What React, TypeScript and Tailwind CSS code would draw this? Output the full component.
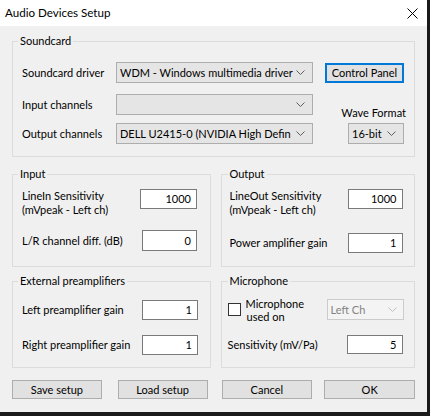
import React from "react";

function Chevron({ color = "#5f5f5f" }: { color?: string }) {
  return (
    <svg width="9" height="5" viewBox="0 0 9 5" className="shrink-0">
      <polyline points="0.5,0.5 4.5,4.5 8.5,0.5" fill="none" stroke={color} strokeWidth="1" />
    </svg>
  );
}

function Combo({ text, className = "" }: { text?: string; className?: string }) {
  return (
    <div className={"flex items-center justify-between border border-[#adadad] bg-[#e5e5e5] pl-[3px] pr-[7px] " + className}>
      <span className="whitespace-nowrap overflow-hidden">{text}</span>
      <Chevron />
    </div>
  );
}

function Field({ value, className = "" }: { value: string; className?: string }) {
  return (
    <div className={"flex items-center justify-end border border-[#7a7a7a] bg-white pr-[5px] shrink-0 " + className}>
      {value}
    </div>
  );
}

function Btn({ label, className = "" }: { label: string; className?: string }) {
  return (
    <div className={"flex items-center justify-center border border-[#adadad] bg-[#e1e1e1] " + className}>
      {label}
    </div>
  );
}

export default function App() {
  return (
    <div className="w-[430px] h-[416px] bg-[#1a1a1a] overflow-hidden font-['Lato',sans-serif] text-[11px] leading-[16px] text-black">
      <div className="w-[427px] h-[412px] bg-[#f0f0f0] flex flex-col">
        {/* Title bar */}
        <div className="h-[26px] bg-white flex items-center justify-between pl-[5px] pr-[9px] shrink-0">
          <span className="text-[11.6px] whitespace-nowrap">Audio Devices Setup</span>
          <svg width="11" height="11" viewBox="0 0 11 11">
            <line x1="0.5" y1="0.5" x2="10.5" y2="10.5" stroke="#000" strokeWidth="1" />
            <line x1="10.5" y1="0.5" x2="0.5" y2="10.5" stroke="#000" strokeWidth="1" />
          </svg>
        </div>

        {/* Soundcard */}
        <fieldset className="mx-[12px] mt-[7px] border border-[#dcdcdc] p-0">
          <legend className="ml-[5px] px-[2px] leading-[16px]">Soundcard</legend>
          <div className="flex pl-[9px] pt-[13px] pb-[12px] whitespace-nowrap">
            <div className="flex flex-col w-[291px]">
              <div className="flex items-center h-[21px]">
                <span className="w-[94px]">Soundcard driver</span>
                <Combo text="WDM - Windows multimedia driver" className="w-[197px] h-[21px]" />
              </div>
              <div className="flex items-center h-[21px] mt-[11px]">
                <span className="w-[94px]">Input channels</span>
                <Combo className="w-[197px] h-[21px]" />
              </div>
              <div className="flex items-center h-[21px] mt-[8px]">
                <span className="w-[94px]">Output channels</span>
                <Combo text="DELL U2415-0 (NVIDIA High Defin" className="w-[197px] h-[21px]" />
              </div>
            </div>
            <div className="flex flex-col ml-[12px] w-[81px]">
              <div className="mt-[1px] h-[20px] w-[79px] border-2 border-[#0078d7] bg-[#e1e1e1] flex items-center justify-center">
                Control Panel
              </div>
              <div className="mt-[22px] text-right">Wave Format</div>
              <Combo text="16-bit" className="mt-[2px] ml-[23px] w-[56px] h-[21px]" />
            </div>
          </div>
        </fieldset>

        {/* Input / Output */}
        <div className="flex mx-[12px] mt-[9px] gap-[10px] whitespace-nowrap">
          <fieldset className="w-[199px] border border-[#dcdcdc] p-0">
            <legend className="ml-[5px] px-[2px] leading-[16px]">Input</legend>
            <div className="pl-[9px] pt-[7px] pb-[13px]">
              <div className="flex items-start">
                <div className="w-[118px] leading-[14px]">
                  LineIn Sensitivity
                  <br />
                  (mVpeak - Left ch)
                </div>
                <Field value="1000" className="w-[57px] h-[20px]" />
              </div>
              <div className="flex items-center mt-[13px]">
                <span className="w-[120px]">L/R channel diff. (dB)</span>
                <Field value="0" className="w-[55px] h-[21px]" />
              </div>
            </div>
          </fieldset>
          <fieldset className="w-[195px] border border-[#dcdcdc] p-0">
            <legend className="ml-[6px] px-[2px] leading-[16px]">Output</legend>
            <div className="pl-[8px] pt-[7px] pb-[13px]">
              <div className="flex items-start">
                <div className="w-[118px] leading-[14px]">
                  LineOut Sensitivity
                  <br />
                  (mVpeak - Left ch)
                </div>
                <Field value="1000" className="w-[55px] h-[20px]" />
              </div>
              <div className="flex items-center mt-[16px]">
                <span className="w-[118px]">Power amplifier gain</span>
                <Field value="1" className="w-[55px] h-[20px]" />
              </div>
            </div>
          </fieldset>
        </div>

        {/* External preamplifiers / Microphone */}
        <div className="flex mx-[12px] mt-[6px] gap-[10px] whitespace-nowrap">
          <fieldset className="w-[199px] border border-[#dcdcdc] p-0">
            <legend className="ml-[5px] px-[2px] leading-[16px]">External preamplifiers</legend>
            <div className="pl-[9px] pt-[11px] pb-[12px]">
              <div className="flex items-center">
                <span className="w-[120px]">Left preamplifier gain</span>
                <Field value="1" className="w-[56px] h-[20px]" />
              </div>
              <div className="flex items-center mt-[15px]">
                <span className="w-[120px]">Right preamplifier gain</span>
                <Field value="1" className="w-[56px] h-[20px]" />
              </div>
            </div>
          </fieldset>
          <fieldset className="w-[195px] border border-[#dcdcdc] p-0">
            <legend className="ml-[6px] px-[2px] leading-[16px]">Microphone</legend>
            <div className="pl-[6px] pt-[10px] pb-[12px]">
              <div className="flex items-center h-[21px]">
                <div className="w-[13px] h-[13px] border border-[#333] bg-white shrink-0" />
                <div className="ml-[5px] w-[81px] leading-[13px]">
                  Microphone
                  <br />
                  <span className="pl-[1px]">used on</span>
                </div>
                <div className="flex items-center justify-between w-[77px] h-[21px] border border-[#cccccc] bg-[#f4f4f4] pl-[3px] pr-[6px] text-[#838383]">
                  <span>Left Ch</span>
                  <Chevron color="#bfbfbf" />
                </div>
              </div>
              <div className="flex items-center mt-[15px]">
                <span className="w-[119px]">Sensitivity (mV/Pa)</span>
                <Field value="5" className="w-[56px] h-[19px]" />
              </div>
            </div>
          </fieldset>
        </div>

        {/* Buttons */}
        <div className="flex mx-[12px] mt-[12px] h-[19px] whitespace-nowrap">
          <Btn label="Save setup" className="w-[90px] h-[19px]" />
          <Btn label="Load setup" className="w-[90px] h-[19px] ml-[16px]" />
          <Btn label="Cancel" className="w-[91px] h-[19px] ml-[14px]" />
          <Btn label="OK" className="w-[91px] h-[19px] ml-[12px]" />
        </div>
      </div>
    </div>
  );
}
